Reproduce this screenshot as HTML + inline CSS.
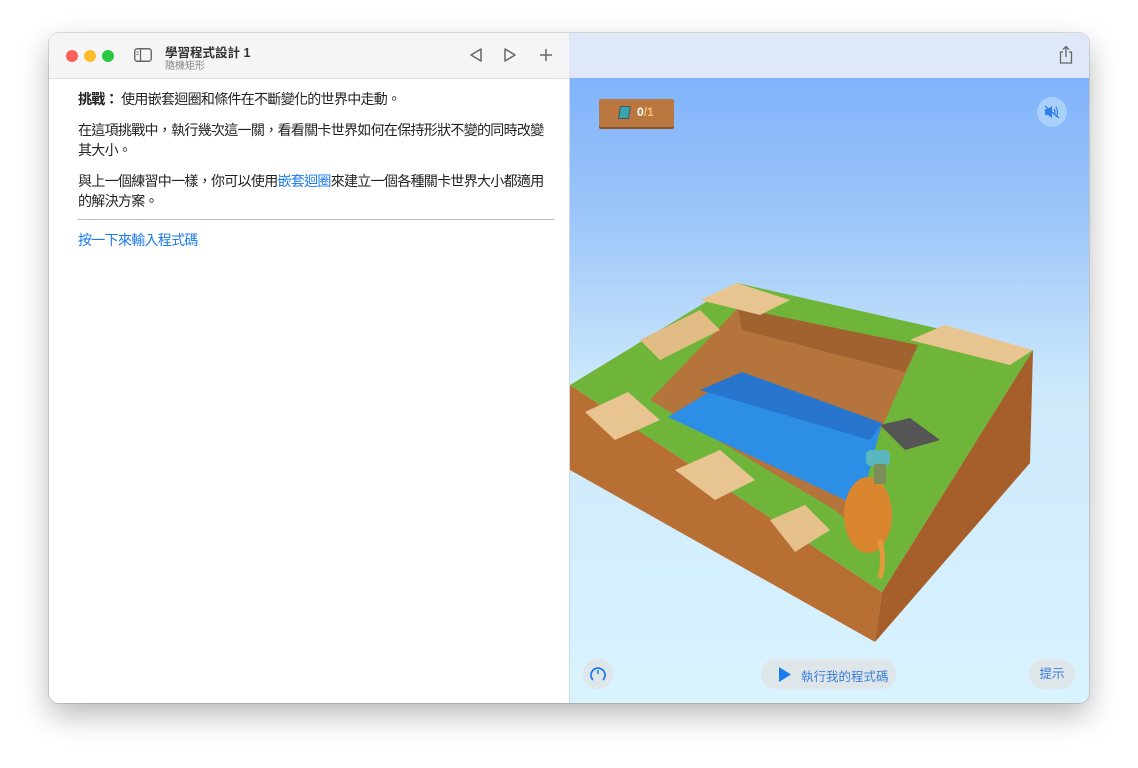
<!DOCTYPE html>
<html><head><meta charset="utf-8"><style>
*{margin:0;padding:0;box-sizing:border-box}
body{width:1138px;height:768px;background:#fff;position:relative;overflow:hidden;font-family:"Liberation Sans","Noto Sans CJK TC",sans-serif}
.win{position:absolute;left:49px;top:33px;width:1040px;height:670px;border-radius:10px;overflow:hidden;box-shadow:0 12px 30px rgba(0,0,0,.28),0 0 0 1px rgba(0,0,0,.12);background:#fff}
.lbar{position:absolute;left:0;top:0;width:520px;height:46px;background:#f5f5f7;border-bottom:1px solid #e2e2e2}
.rbar{position:absolute;left:520px;top:0;width:520px;height:45px;background:#dfe8f8}
.dot{position:absolute;top:17px;width:12px;height:12px;border-radius:50%}
.scene{position:absolute;left:520px;top:45px;width:520px;height:625px;background:linear-gradient(#80b3fb 0%,#9cc6fa 22%,#cde9fb 50%,#d9f3fe 100%);border-left:1px solid #cfd6e0}
.txt{position:absolute;left:29px;font-size:14px;letter-spacing:-0.7px;color:#222;line-height:20px}
a{color:#1a7af0;text-decoration:none}
</style></head><body>
<div class="win">
<div class="lbar">
<div class="dot" style="left:17px;background:#fe5f57"></div>
<div class="dot" style="left:35px;background:#febc2e"></div>
<div class="dot" style="left:53px;background:#28c840"></div>
<svg style="position:absolute;left:85px;top:15px" width="18" height="14"><rect x="0.75" y="0.75" width="16.5" height="12.5" rx="2.5" fill="none" stroke="#666" stroke-width="1.4"/><line x1="6.5" y1="1" x2="6.5" y2="13" stroke="#666" stroke-width="1.3"/><line x1="2.5" y1="4" x2="4.5" y2="4" stroke="#666"/><line x1="2.5" y1="6.5" x2="4.5" y2="6.5" stroke="#666"/></svg>
<div style="position:absolute;left:116px;top:9px;font-size:12.5px;font-weight:bold;color:#333">學習程式設計 1</div>
<div style="position:absolute;left:116px;top:24px;font-size:10px;color:#888">隨機矩形</div>
<svg style="position:absolute;left:420px;top:14px" width="14" height="16"><path d="M12 2 L2 8 L12 14 Z" fill="none" stroke="#666" stroke-width="1.5" stroke-linejoin="round"/></svg>
<svg style="position:absolute;left:454px;top:14px" width="14" height="16"><path d="M2 2 L12 8 L2 14 Z" fill="none" stroke="#666" stroke-width="1.5" stroke-linejoin="round"/></svg>
<svg style="position:absolute;left:490px;top:15px" width="14" height="14"><path d="M7 1V13M1 7H13" stroke="#666" stroke-width="1.5"/></svg>
</div>
<div class="rbar">
<svg style="position:absolute;left:489px;top:12px" width="16" height="20"><path d="M5 7H2.5V18H13.5V7H11M8 12V1.5M5 4.5L8 1.5L11 4.5" fill="none" stroke="#666" stroke-width="1.3"/></svg>
</div>
<div class="txt" style="top:56px"><b>挑戰：</b> 使用嵌套迴圈和條件在不斷變化的世界中走動。</div>
<div class="txt" style="top:87px;width:476px">在這項挑戰中，執行幾次這一關，看看關卡世界如何在保持形狀不變的同時改變其大小。</div>
<div class="txt" style="top:138px;width:476px">與上一個練習中一樣，你可以使用<a>嵌套迴圈</a>來建立一個各種關卡世界大小都適用的解決方案。</div>
<div style="position:absolute;left:29px;top:186px;width:476px;height:1px;background:#bbb"></div>
<div class="txt" style="top:197px;color:#1a7af0">按一下來輸入程式碼</div>

<div class="scene">
<svg width="520" height="625" style="position:absolute;left:0;top:0" viewBox="570 78 520 625">
<polygon points="570,385 570,470 875,642 882,592" fill="#b86f33"/>
<polygon points="882,592 1033,350 1030,463 875,642" fill="#a65f2a"/>
<polygon points="570,385 737,283 1033,350 882,592" fill="#6fb53a"/>
<polygon points="650,400 738,308 918,345 872,450 855,528 835,510" fill="#b5743b"/>
<polygon points="738,308 918,345 905,372 742,330" fill="#a0622e"/>
<polygon points="668,417 742,372 882,423 860,507" fill="#2d8ee5"/>
<polygon points="742,372 882,423 870,440 700,390" fill="#2775cc"/>
<polygon points="585,412 628,392 660,420 615,440" fill="#e8c590"/>
<polygon points="675,470 720,450 755,480 715,500" fill="#e8c590"/>
<polygon points="770,520 805,505 830,530 795,552" fill="#e6c18a"/>
<polygon points="700,300 737,283 790,300 760,315" fill="#e8c590"/>
<polygon points="640,340 700,310 720,330 660,360" fill="#e2bc85"/>
<polygon points="910,340 945,325 1033,350 1010,365" fill="#e8c590"/>
<polygon points="880,425 910,418 940,440 905,450" fill="#555"/>
<ellipse cx="868" cy="515" rx="24" ry="38" fill="#d9862f"/>
<rect x="866" y="450" width="24" height="16" rx="5" fill="#5ab7c0"/>
<rect x="874" y="464" width="12" height="20" fill="#7a8d5a"/>
<path d="M880 540 Q885 560 880 578" stroke="#e39a3c" stroke-width="5" fill="none"/>
</svg>
<div style="position:absolute;left:29px;top:21px;width:75px;height:28px;background:#b9773f;border-radius:2px;box-shadow:0 2px 0 #8a5326"></div>
<div style="position:absolute;left:49px;top:28px;width:11px;height:13px;background:#3aa5a8;transform:skew(-8deg);border:1px solid #456"></div>
<div style="position:absolute;left:67px;top:27px;font-size:12px;font-weight:bold;color:#fff">0<span style="color:#f1c27a">/1</span></div>
<div style="position:absolute;left:467px;top:19px;width:30px;height:30px;border-radius:50%;background:#a9d0fb"></div>
<svg style="position:absolute;left:473px;top:26px" width="18" height="16"><path d="M2 5H5L9 2V14L5 11H2Z" fill="#2f7de6"/><path d="M11 5Q13 8 11 11M13 3Q16 8 13 13" stroke="#2f7de6" fill="none" stroke-width="1.2"/><line x1="2" y1="2" x2="16" y2="14" stroke="#2f7de6" stroke-width="1.2"/></svg>
<div style="position:absolute;left:13px;top:581px;width:30px;height:30px;border-radius:50%;background:#dfe6ea"></div>
<svg style="position:absolute;left:18px;top:586px" width="20" height="20"><path d="M5 16A7 7 0 1 1 15 16" fill="none" stroke="#1a7af0" stroke-width="1.8"/><line x1="10" y1="6" x2="10" y2="10" stroke="#1a7af0" stroke-width="1.5"/></svg>
<div style="position:absolute;left:191px;top:581px;width:135px;height:30px;border-radius:15px;background:#dfe6ea"></div>
<svg style="position:absolute;left:208px;top:589px" width="14" height="15"><path d="M1 0L13 7.5L1 15Z" fill="#1a7af0"/></svg>
<div style="position:absolute;left:231px;top:588px;font-size:12.5px;color:#3a7fd8">執行我的程式碼</div>
<div style="position:absolute;left:459px;top:581px;width:46px;height:30px;border-radius:15px;background:#dfe6ea;font-size:12.5px;color:#3a7fd8;text-align:center;line-height:30px">提示</div>
</div>
</div>
</body></html>
